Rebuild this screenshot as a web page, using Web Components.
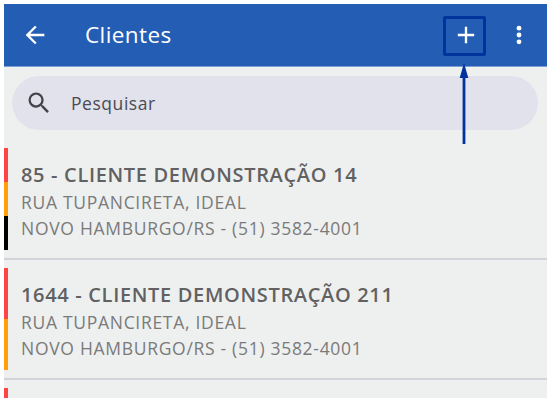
<!DOCTYPE html>
<html>
<head>
<meta charset="utf-8">
<style>
  html, body { margin: 0; background: #fff; }
  body { font-family: "Open Sans", sans-serif; }
</style>
</head>
<body>
<clientes-app>
  <client-row code="85 - CLIENTE DEMONSTRAÇÃO 14" colors="#ff4444,#ff9f0a,#000000"></client-row>
  <client-row code="1644 - CLIENTE DEMONSTRAÇÃO 211" colors="#ff4444,#ff9f0a"></client-row>
  <client-row colors="#ff4444"></client-row>
</clientes-app>
<script>
class AppBar extends HTMLElement {
  connectedCallback() {
    this.attachShadow({ mode: 'open' });
    this.shadowRoot.innerHTML = `
      <style>
        :host {
          display: flex;
          align-items: center;
          height: 62px;
          background: #245eb4;
          border-bottom: 1px solid #7d9fd2;
          color: #fff;
          position: relative;
        }
        .back { display: flex; margin-left: 17px; }
        .title { margin-left: 36px; font-size: 22.5px; letter-spacing: .4px; line-height: 30px; flex: 1; }
        .add { display: flex; margin-right: 35px; }
        .more { display: flex; margin-right: 24px; }
      </style>
      <span class="back">
        <svg width="28" height="28" viewBox="0 0 24 24" fill="#fff"><path d="M20 11H7.83l5.59-5.59L12 4l-8 8 8 8 1.41-1.41L7.83 13H20z"/></svg>
      </span>
      <span class="title">Clientes</span>
      <span class="add">
        <svg width="28" height="28" viewBox="0 0 24 24" fill="#fff"><path d="M19 13h-6v6h-2v-6H5v-2h6V5h2v6h6z"/></svg>
      </span>
      <span class="more">
        <svg width="8" height="24" viewBox="0 0 8 24" fill="#fff"><circle cx="4" cy="5.2" r="2.4"/><circle cx="4" cy="12" r="2.4"/><circle cx="4" cy="18.8" r="2.4"/></svg>
      </span>
    `;
  }
}
customElements.define('app-bar', AppBar);

class SearchBox extends HTMLElement {
  connectedCallback() {
    this.attachShadow({ mode: 'open' });
    this.shadowRoot.innerHTML = `
      <style>
        :host {
          display: flex;
          align-items: center;
          height: 54px;
          margin: 9px 9px 0 8px;
          border-radius: 27px;
          background: #e1e2ec;
          color: #4c4b52;
          font-size: 17.5px;
          letter-spacing: .55px;
        }
        svg { margin-left: 13px; }
        span { margin-left: 18px; }
      </style>
      <svg width="28" height="28" viewBox="0 0 24 24" fill="#44444a"><path d="M15.5 14h-.79l-.28-.27A6.47 6.47 0 0 0 16 9.5 6.5 6.5 0 1 0 9.5 16c1.61 0 3.09-.59 4.23-1.57l.27.28v.79l5 4.99L20.49 19l-4.99-5zm-6 0C7.01 14 5 11.99 5 9.5S7.01 5 9.5 5 14 7.01 14 9.5 11.99 14 9.5 14z"/></svg>
      <span>Pesquisar</span>
    `;
  }
}
customElements.define('search-box', SearchBox);

class ClientRow extends HTMLElement {
  connectedCallback() {
    const colors = (this.getAttribute('colors') || '').split(',');
    const code = this.getAttribute('code');
    this.attachShadow({ mode: 'open' });
    this.shadowRoot.innerHTML = `
      <style>
        :host {
          display: block;
          height: 120px;
          box-sizing: border-box;
          padding-bottom: 8px;
        }
        .row {
          display: flex;
          height: 102px;
        }
        .tags { display: flex; flex-direction: column; width: 4px; }
        .tags i { flex: 1; display: block; }
        .info { margin-left: 13px; padding-top: 12.5px; min-width: 0; }
        .name { font-size: 20px; letter-spacing: .67px; line-height: 27px; font-weight: 600; color: #616161; white-space: nowrap; margin-bottom: 1px; }
        .line { font-size: 17.5px; letter-spacing: .7px; line-height: 26.5px; color: #7a7a7a; white-space: nowrap; }
        .sep { height: 2px; margin-top: 8px; background: #d3d4da; }
      </style>
      <div class="row">
        <div class="tags">${colors.map(c => `<i style="background:${c}"></i>`).join('')}</div>
        ${code ? `<div class="info">
          <div class="name">${code}</div>
          <div class="line">RUA TUPANCIRETA, IDEAL</div>
          <div class="line">NOVO HAMBURGO/RS - (51) 3582-4001</div>
        </div>` : ''}
      </div>
      <div class="sep"></div>
    `;
  }
}
customElements.define('client-row', ClientRow);

class ClientesApp extends HTMLElement {
  connectedCallback() {
    this.attachShadow({ mode: 'open' });
    this.shadowRoot.innerHTML = `
      <style>
        :host {
          display: block;
          position: relative;
          margin: 4px;
          height: 394px;
          overflow: hidden;
          background: #eef0f0;
        }
        .list { margin-top: 18px; }
        /* anotacao do tutorial por cima da barra */
        .box {
          position: absolute;
          left: 438.5px;
          top: 12px;
          width: 43.5px;
          height: 40px;
          box-sizing: border-box;
          border: 3px solid #00339b;
          border-radius: 2px;
        }
        .arrow { position: absolute; left: 451.5px; top: 59px; }
      </style>
      <app-bar></app-bar>
      <search-box></search-box>
      <div class="list"><slot></slot></div>
      <div class="box"></div>
      <svg class="arrow" width="16" height="81" viewBox="0 0 16 81"><path d="M8 0 L12.3 15 H9.4 V81 H6.6 V15 H3.7 Z" fill="#00339b"/></svg>
    `;
  }
}
customElements.define('clientes-app', ClientesApp);
</script>
</body>
</html>
